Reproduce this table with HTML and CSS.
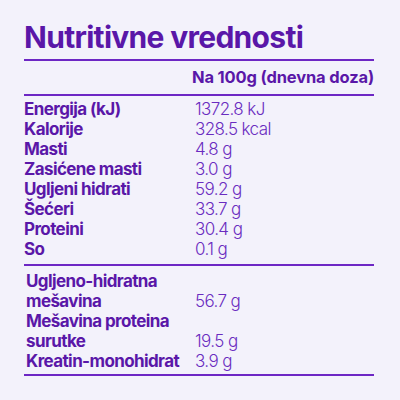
FILE: index.html
```html
<!DOCTYPE html>
<html lang="sr">
<head>
    <meta charset="UTF-8">
    <meta name="viewport" content="width=device-width, initial-scale=1.0">
    <title>Nutritivne vrednosti</title>
    <link rel="stylesheet" href="styles.css">
</head>
<body>
    <div class="panel">
        <h1 class="title">Nutritivne vrednosti</h1>

        <div class="head">Na 100g (dnevna doza)</div>

        <div class="facts">
            <span class="name">Energija (kJ)</span><span class="amount">1372.8 kJ</span>
            <span class="name">Kalorije</span><span class="amount">328.5 kcal</span>
            <span class="name">Masti</span><span class="amount">4.8 g</span>
            <span class="name">Zasićene masti</span><span class="amount">3.0 g</span>
            <span class="name">Ugljeni hidrati</span><span class="amount">59.2 g</span>
            <span class="name">Šećeri</span><span class="amount">33.7 g</span>
            <span class="name">Proteini</span><span class="amount">30.4 g</span>
            <span class="name">So</span><span class="amount">0.1 g</span>
        </div>

        <div class="facts extra">
            <span class="name">Ugljeno-hidratna mešavina</span><span class="amount">56.7 g</span>
            <span class="name">Mešavina proteina surutke</span><span class="amount">19.5 g</span>
            <span class="name">Kreatin-monohidrat</span><span class="amount">3.9 g</span>
        </div>
    </div>
</body>
</html>
```

FILE: styles.css
```css
body {
    margin: 0;
    background-color: #f3f2fb;
    font-family: "Inter", "Noto Sans", sans-serif;
    color: #5a17a8;
}

.panel {
    width: 350px;
    padding: 19px 26px 0 24px;
}

.title {
    margin: 0;
    padding-bottom: 4px;
    font-size: 30px;
    line-height: 36px;
    font-weight: 700;
    letter-spacing: -0.7px;
    border-bottom: 2px solid #6d27c4;
}

.head {
    text-align: right;
    font-size: 16.5px;
    font-weight: 700;
    letter-spacing: -0.15px;
    line-height: 20px;
    padding: 6px 0 7px;
    border-bottom: 2px solid #6d27c4;
}

.facts {
    display: grid;
    grid-template-columns: 171px 1fr;
    font-size: 17px;
    line-height: 20px;
    letter-spacing: -0.6px;
    padding: 3px 0 5px;
    border-bottom: 2px solid #6d27c4;
}

.name {
    font-weight: 700;
}

.amount {
    color: #6a2cc0;
    font-weight: 300;
    align-self: end;
}

.extra {
    padding: 5px 0 3px;
}

.extra .name {
    padding-left: 2px;
    padding-right: 10px;
}
```
